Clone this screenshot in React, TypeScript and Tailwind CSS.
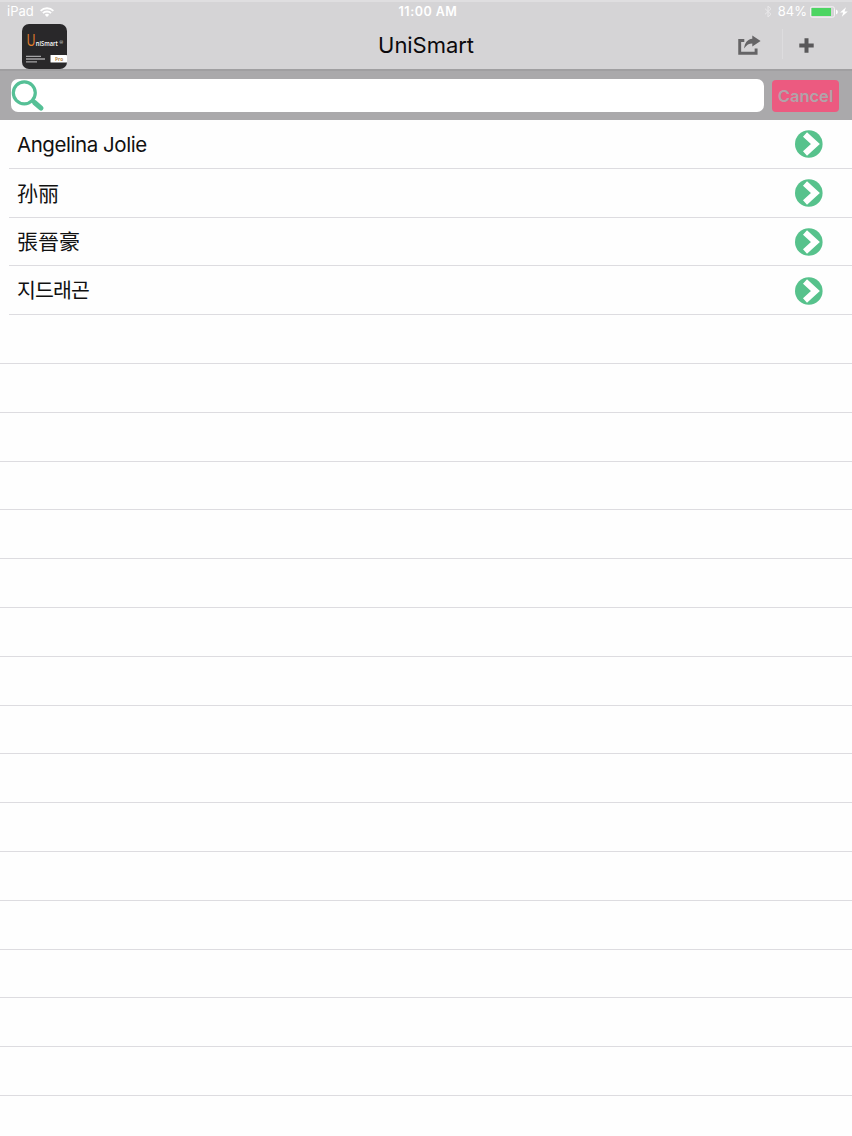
import React from 'react'

const contacts: Contact[] = [
  { name: 'Angelina Jolie', lang: 'en', style: 'text-[20.5px] tracking-[-0.45px] pt-px' },
  { name: '孙丽', lang: 'zh-CN', style: 'text-[21px]' },
  { name: '張晉豪', lang: 'zh-TW', style: 'text-[21px]' },
  { name: '지드래곤', lang: 'ko', style: 'text-[20.5px] tracking-[-0.9px] pt-px' },
]

const EMPTY_ROWS = 16

type Contact = {
  name: string
  lang: string
  style: string
}

export default function App() {
  return (
    <div className="flex flex-col w-full h-[1136px] overflow-hidden bg-[#fefefe] font-[Inter,'Noto_Sans_CJK_SC',sans-serif]">
      <StatusBar />
      <Header />
      <SearchBar />
      <ContactList items={contacts} />
    </div>
  )
}

function StatusBar() {
  return (
    <div className="grid grid-cols-3 items-center h-[22px] shrink-0 pl-[7px] pr-[4px] border-t-2 border-[#dfdee0] bg-[#d5d4d6] text-[13px] leading-none text-white">
      <div className="flex items-center gap-[6px] pb-px">
        <span>iPad</span>
        <WifiIcon />
      </div>
      <div className="text-center font-semibold text-[12.5px] tracking-[0.5px] pl-px">
        11:00 AM
      </div>
      <div className="flex items-center justify-end pb-px">
        <BluetoothIcon />
        <span className="ml-[6px] mr-[3px]">84%</span>
        <BatteryIcon />
      </div>
    </div>
  )
}

function Header() {
  return (
    <header className="grid grid-cols-3 h-[47px] shrink-0 bg-[#d5d4d6]">
      <div className="pl-[22px] pt-[2px]">
        <AppLogo />
      </div>
      <h1 className="text-center text-[22px] leading-[46px] tracking-[-0.05px] text-[#0b090c]">
        UniSmart
      </h1>
      <div className="flex justify-end items-center pb-px">
        <button aria-label="Share" className="mr-[21px]">
          <ShareIcon />
        </button>
        <span className="w-px h-[30px] mb-[2px] bg-[#dddcde]" />
        <button aria-label="Add" className="ml-[16px] mr-[38.5px]">
          <PlusIcon />
        </button>
      </div>
    </header>
  )
}

function SearchBar() {
  return (
    <div className="flex items-start h-[51px] shrink-0 pl-[11px] pr-[13px] pt-[8px] border-t-2 border-[#a09fa1] bg-[#aaa9ab]">
      <div className="flex items-center w-[753px] h-[33px] rounded-[7px] bg-white">
        <SearchIcon />
      </div>
      <button className="ml-[8px] mt-px w-[67px] h-[32px] rounded-[4px] bg-[#ec5a80] text-[16.5px] leading-[31px] font-semibold text-[#b1a3a9]">
        Cancel
      </button>
    </div>
  )
}

function ContactList({ items }: { items: Contact[] }) {
  return (
    <ul>
      {items.map((item) => (
        <li key={item.name} className="h-[48.81px] pl-[9px]">
          <div className="flex items-center justify-between h-full pt-px pl-[8px] pr-[29px] border-b border-[#dddce0]">
            <span
              lang={item.lang}
              className={`${item.style} leading-none text-[#111]`}
            >
              {item.name}
            </span>
            <ArrowIcon />
          </div>
        </li>
      ))}
      {Array.from({ length: EMPTY_ROWS }, (_, i) => (
        <li key={i} className="h-[48.81px] border-b border-[#dddce0]" />
      ))}
    </ul>
  )
}

function AppLogo() {
  return (
    <svg width="56" height="45" viewBox="0 0 56 45" className="block">
      <rect width="45" height="45" rx="7" fill="#29282a" />
      <text
        x="4.5"
        y="21.5"
        fontFamily="Open Sans, sans-serif"
        fontSize="16"
        textLength="9"
        lengthAdjust="spacingAndGlyphs"
        fill="#e5802c"
      >
        U
      </text>
      <text
        x="13.8"
        y="21.5"
        fontFamily="Open Sans, sans-serif"
        fontSize="7.4"
        fontWeight="600"
        textLength="22"
        lengthAdjust="spacingAndGlyphs"
        fill="#fff"
      >
        niSmart
      </text>
      <text
        x="37.6"
        y="20"
        fontFamily="Open Sans, sans-serif"
        fontSize="4.2"
        fill="#fff"
      >
        ®
      </text>
      <path
        d="M4 32.3h15M4 35h19M4 37.8h11"
        stroke="#a5a4a6"
        strokeWidth="1.3"
      />
      <rect x="28.5" y="31" width="16.5" height="7.5" rx="0.5" fill="#fff" />
      <text
        x="33"
        y="36.6"
        fontFamily="Open Sans, sans-serif"
        fontSize="4.8"
        fontWeight="700"
        fill="#b98a4e"
      >
        Pro
      </text>
    </svg>
  )
}

function WifiIcon() {
  return (
    <svg width="14" height="10" viewBox="0 0 14 10" fill="none">
      <path
        d="M0.6 3.9a9 9 0 0 1 12.8 0M2.9 6.2a5.8 5.8 0 0 1 8.2 0"
        stroke="#fff"
        strokeWidth="1.8"
      />
      <path d="M4.8 7.8a3.1 3.1 0 0 1 4.4 0L7 10z" fill="#fff" />
    </svg>
  )
}

function BluetoothIcon() {
  return (
    <svg width="8" height="13" viewBox="0 0 8 13" fill="none">
      <path
        d="M1 3.7l6 5.5-3 2.8V1l3 2.8-6 5.5"
        stroke="#e9e8ea"
        strokeWidth="1"
      />
    </svg>
  )
}

function BatteryIcon() {
  return (
    <svg width="38" height="12" viewBox="0 0 38 12" fill="none">
      <rect x="0.5" y="0.8" width="24" height="10.4" rx="1.8" stroke="#f4f3f5" />
      <rect x="1.5" y="2" width="19.5" height="8" fill="#4cd562" />
      <path d="M26 3.5a2.6 2.6 0 0 1 0 5z" fill="#fff" />
      <path d="M36 1.2l-6 5.4h3.2l-1.4 4.2 6-5.4h-3.3z" fill="#fff" />
    </svg>
  )
}

function ShareIcon() {
  return (
    <svg width="23" height="20" viewBox="0 0 23 20" fill="none" className="block">
      <path
        d="M6.3 5.5H1.7v12.8h16.4v-4.8"
        stroke="#656466"
        strokeWidth="2.9"
      />
      <path
        d="M14.3 0.6L22.6 6l-8.3 5.6V8.5c-3.3 0-5.7 1.3-8.2 5.1.5-5.5 3.1-9.3 8.2-9.9z"
        fill="#656466"
      />
    </svg>
  )
}

function PlusIcon() {
  return (
    <svg width="15" height="15" viewBox="0 0 15 15" className="block">
      <path d="M7.5 0.3v14.4M0.3 7.5h14.4" stroke="#59585a" strokeWidth="4" />
    </svg>
  )
}

function SearchIcon() {
  return (
    <svg width="34" height="33" viewBox="0 0 34 33" fill="none">
      <circle cx="13.3" cy="13.8" r="11" stroke="#55c096" strokeWidth="3.2" />
      <path d="M20.8 21.2l3.5 3.3" stroke="#55c096" strokeWidth="3" />
      <path
        d="M23.5 23.5l6.5 5.7"
        stroke="#55c096"
        strokeWidth="5"
        strokeLinecap="round"
      />
    </svg>
  )
}

function ArrowIcon() {
  return (
    <svg width="28" height="28" viewBox="0 0 28 28" fill="none">
      <circle cx="13.8" cy="14" r="13.8" fill="#57c28c" />
      <path d="M10 4.6l10.4 9.4L10 23.4" stroke="#fff" strokeWidth="6" />
    </svg>
  )
}
